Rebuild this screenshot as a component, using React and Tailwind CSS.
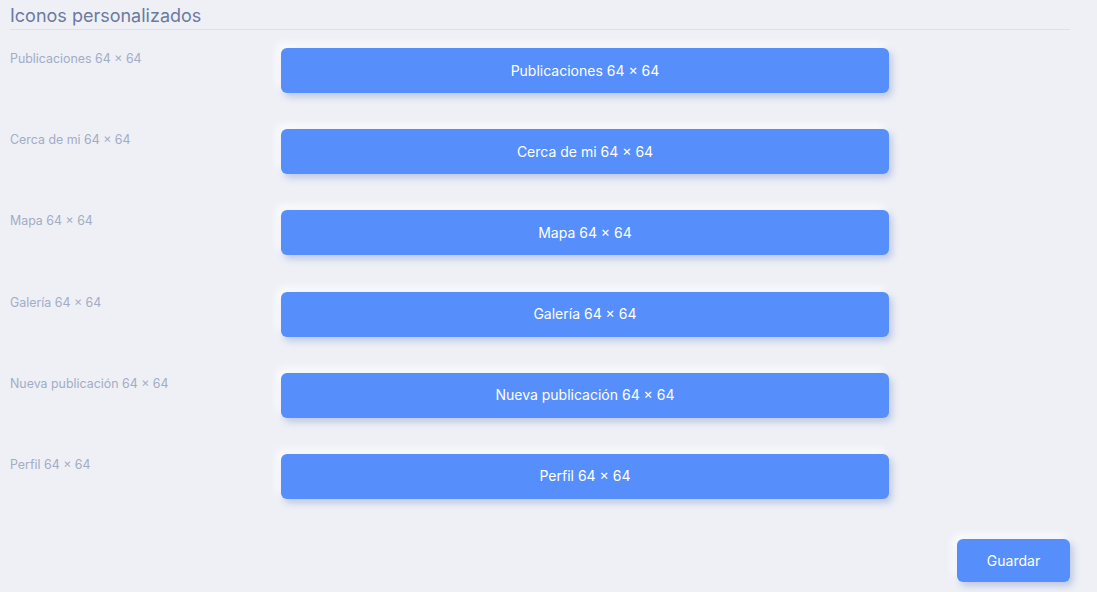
import React from "react";

const rows = [
  "Publicaciones 64 × 64",
  "Cerca de mi 64 × 64",
  "Mapa 64 × 64",
  "Galería 64 × 64",
  "Nueva publicación 64 × 64",
  "Perfil 64 × 64",
];

export default function App() {
  return (
    <div
      className="min-h-screen bg-[#eef0f6] pl-[10px] pt-[4px]"
      style={{ fontFamily: "Inter, 'Noto Sans', sans-serif" }}
    >
      <div className="w-[1060px]">
        <h2 className="text-[18px] leading-[24px] text-[#6b7aa1] font-normal pb-[1px] border-b border-[#dde0e9]">
          Iconos personalizados
        </h2>
        <div className="mt-[18px] flex flex-col gap-[36.2px]">
          {rows.map((r) => (
            <div key={r} className="flex items-start">
              <div className="w-[271px] pt-[1px] text-[12.4px] leading-[20px] text-[#a3acc5]">{r}</div>
              <button className="w-[608px] h-[45px] pb-[1px] rounded-[6px] bg-[#568ffb] text-white text-[14px] font-normal shadow-[3px_4px_7px_rgba(60,95,180,0.28),-4px_-4px_8px_rgba(255,255,255,0.95)]">
                {r}
              </button>
            </div>
          ))}
        </div>
        <div className="flex justify-end mt-[40px]">
          <button className="w-[113px] h-[43px] rounded-[6px] bg-[#568ffb] text-white text-[14px] font-normal shadow-[3px_4px_7px_rgba(60,95,180,0.28),-4px_-4px_8px_rgba(255,255,255,0.95)]">
            Guardar
          </button>
        </div>
      </div>
    </div>
  );
}
